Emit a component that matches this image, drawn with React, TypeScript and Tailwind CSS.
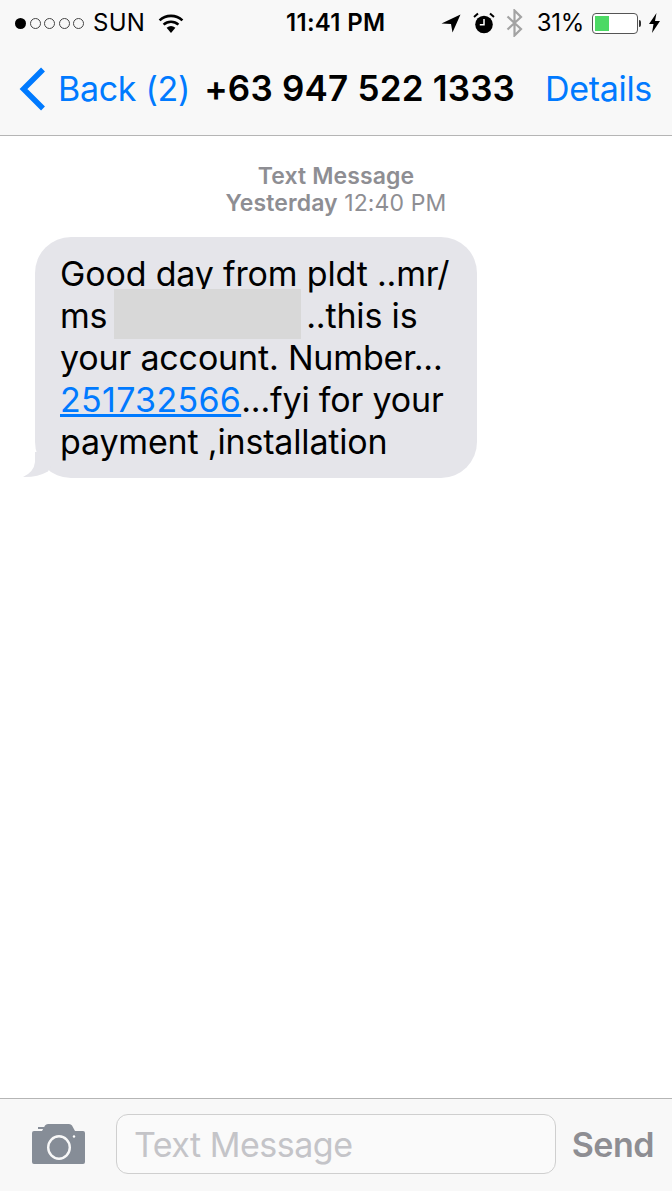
import React from 'react';

const Wifi = () => (
  <svg width="26" height="19" viewBox="0 0 26 19" className="ml-[13px]">
    <path d="M13 19 L8.6 13.8 A7 7 0 0 1 17.4 13.8 Z" fill="#000" />
    <path d="M5.6 10.6 A11 11 0 0 1 20.4 10.6" fill="none" stroke="#000" strokeWidth="2.6" />
    <path d="M1.6 6.4 A16.5 16.5 0 0 1 24.4 6.4" fill="none" stroke="#000" strokeWidth="2.6" />
  </svg>
);

const LocationArrow = () => (
  <svg width="20" height="19" viewBox="0 0 20 19">
    <path d="M0.5 9.5 L19.5 0.5 L11.5 18.5 L10 10 Z" fill="#000" />
  </svg>
);

const Alarm = () => (
  <svg width="22" height="22" viewBox="0 0 22 22">
    <circle cx="11" cy="12.5" r="8.8" fill="#000" />
    <path d="M11 7 V12.8 H6.8" fill="none" stroke="#fff" strokeWidth="1.5" />
    <path d="M1 5 L5 1.5 M21 5 L17 1.5" stroke="#000" strokeWidth="2" />
  </svg>
);

const Bluetooth = () => (
  <svg width="17" height="28" viewBox="0 0 17 28">
    <path d="M1.5 7.5 L15 20 L8.5 26.5 V1.5 L15 8 L1.5 20.5" fill="none" stroke="#a3a3a3" strokeWidth="2.2" />
  </svg>
);

const Battery = () => (
  <div className="flex items-center ml-2">
    <div className="w-[46px] h-[21px] rounded-[4px] border-[1.5px] border-[#555] p-[2px] bg-white">
      <div className="w-[14px] h-full bg-[#4cd964]" />
    </div>
    <div className="w-[2px] h-[7px] ml-[1px] rounded-r-full bg-[#333]" />
  </div>
);

const Bolt = () => (
  <svg width="11" height="20" viewBox="0 0 11 20" className="ml-[8px]">
    <path d="M7.5 0 L0 11 H4.5 L3 20 L11 8 H6 Z" fill="#000" />
  </svg>
);

const Camera = () => (
  <svg width="53" height="40" viewBox="0 0 53 40" className="shrink-0">
    <path
      fillRule="evenodd"
      fill="#868d97"
      d="M2 7 H10 L13 1.5 Q14 0 16 0 H37 Q39 0 40 1.5 L43 7 H51 Q53 7 53 9 V38 Q53 40 51 40 H2 Q0 40 0 38 V9 Q0 7 2 7 Z M27 11 A12 12.5 0 1 0 27.01 36 A12 12.5 0 1 0 27 11 Z M27 13.5 A9.6 10 0 1 1 26.99 33.5 A9.6 10 0 1 1 27 13.5 Z"
    />
    <rect x="6" y="3" width="6" height="2" fill="#868d97" />
    <circle cx="42" cy="12.5" r="1.2" fill="#fff" />
  </svg>
);

export default function App() {
  const font = { fontFamily: 'Inter, "Liberation Sans", sans-serif' };

  return (
    <div className="w-[672px] h-[1191px] flex flex-col bg-white text-black overflow-hidden" style={font}>
      {/* Status bar + nav */}
      <header className="h-[136px] shrink-0 bg-[#f8f8f8] border-b border-[#b5b5b5]">
        <div className="relative h-[44px] flex items-center pl-[15px] pr-[12px] pt-[2px] text-[24px] leading-none">
          <div className="flex items-center gap-[3.5px]">
            <span className="w-[11px] h-[11px] rounded-full bg-black" />
            {[0, 1, 2, 3].map((i) => (
              <span key={i} className="w-[11px] h-[11px] rounded-full border border-[#444]" />
            ))}
          </div>
          <span className="ml-[9px] tracking-[0.3px]">SUN</span>
          <Wifi />
          <span className="absolute left-[286px] font-semibold tracking-[0.3px]">11:41 PM</span>
          <div className="ml-auto flex items-center">
            <LocationArrow />
            <span className="w-3" />
            <Alarm />
            <span className="w-[11px]" />
            <Bluetooth />
            <span className="ml-[14px] tracking-[-0.3px]">31%</span>
            <Battery />
            <Bolt />
          </div>
        </div>
        <nav className="h-[91px] flex items-center pl-[19px] pr-[20px] text-[34px] leading-none pb-[2px]">
          <svg width="27" height="44" viewBox="0 0 27 44" className="shrink-0">
            <path d="M24 2.5 L4.5 22 L24 41.5" fill="none" stroke="#007aff" strokeWidth="5.5" />
          </svg>
          <span className="ml-[12px] text-[#007aff] tracking-[-0.3px]">Back (2)</span>
          <span className="ml-[14px] text-[35px] font-semibold tracking-[0.2px]">+63 947 522 1333</span>
          <span className="ml-auto text-[#007aff] tracking-[-0.3px]">Details</span>
        </nav>
      </header>

      {/* Messages */}
      <main className="flex-1 pt-[27px]">
        <div className="text-center text-[#8e8e93] text-[23px] leading-[27px] tracking-[0.1px]">
          <div className="font-semibold">Text Message</div>
          <div>
            <span className="font-semibold">Yesterday</span> 12:40 PM
          </div>
        </div>
        <div className="relative ml-[35px] mt-[20px] w-[442px] h-[241px] rounded-[36px] bg-[#e5e5ea] pl-[25px] pt-[16px] text-[34px] leading-[42px] tracking-[-0.17px] whitespace-nowrap">
          <svg width="30" height="26" viewBox="0 0 30 26" className="absolute left-[-12px] bottom-0">
            <path d="M12 0 V10 Q11 20 0 25 Q14 25.5 25 19.5 L30 10 V0 Z" fill="#e5e5ea" />
          </svg>
          <div className="relative">
            Good day from pldt ..mr/
            <br />
            ms{' '}
            <span className="relative inline-block w-[187px] ml-[-3px] mr-[-4px] h-[1px]">
              <span className="absolute left-0 bottom-[-11px] w-full h-[50px] bg-[#d8d8d8]" />
            </span>{' '}
            ..this is
            <br />
            your account. Number...
            <br />
            <span className="text-[#007aff] underline tracking-[0.3px]">251732566</span>...fyi for your
            <br />
            payment ,installation
          </div>
        </div>
      </main>

      {/* Input bar */}
      <footer className="h-[93px] shrink-0 bg-[#f8f8f8] border-t border-[#b5b5b5] flex items-center pl-[32px] pr-[18px] pb-[2px]">
        <Camera />
        <div className="ml-[31px] w-[440px] h-[60px] rounded-[12px] border border-[#cfcfcf] bg-[#fafafa] flex items-center pl-[17px] text-[34px] text-[#c4c4c8] tracking-[-0.5px]">
          Text Message
        </div>
        <span className="ml-auto text-[34px] font-semibold text-[#8e8e93] tracking-[-0.5px]">Send</span>
      </footer>
    </div>
  );
}
